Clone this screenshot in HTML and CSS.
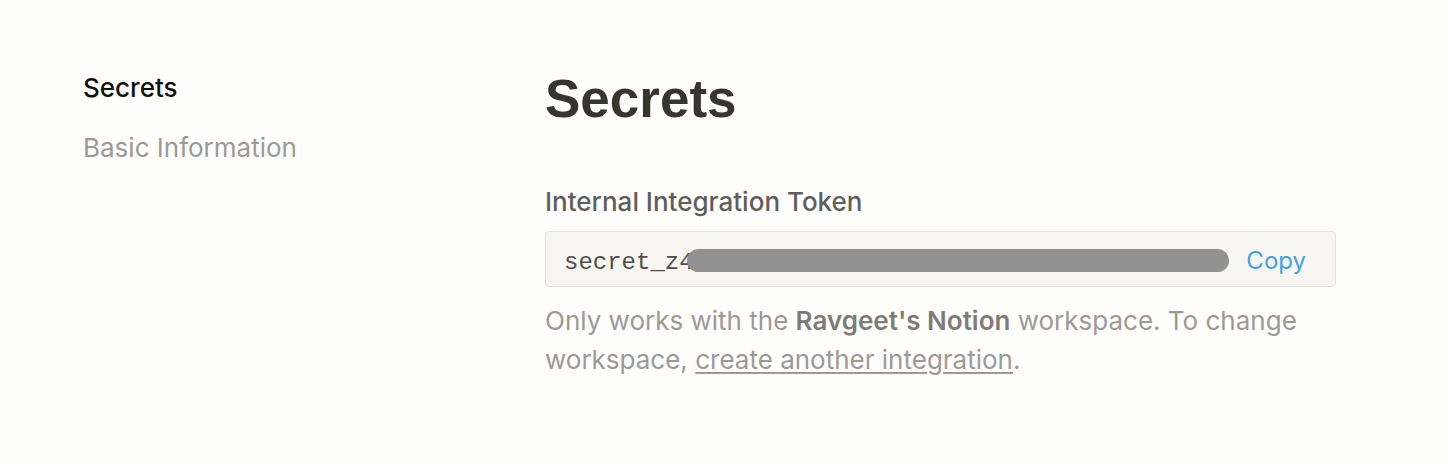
FILE: index.html
```html
<!DOCTYPE html>
<html lang="en">
<head>
  <meta charset="UTF-8" />
  <meta name="viewport" content="width=device-width, initial-scale=1" />
  <title>Secrets - Integration</title>
  <link rel="stylesheet" href="styles.css">
</head>
<body>

<div class="page">
  <nav class="sidebar">
    <a class="nav-item active" href="#secrets">Secrets</a>
    <a class="nav-item" href="#basic">Basic Information</a>
  </nav>

  <main class="content">
    <h1>Secrets</h1>

    <div class="field-label">Internal Integration Token</div>
    <div class="token-box">
      <span class="token">secret_z4<span class="redacted"></span></span>
      <button class="copy-btn" type="button">Copy</button>
    </div>
    <p class="help">
      Only works with the <strong>Ravgeet's Notion</strong> workspace. To change
      workspace, <a href="#">create another integration</a>.
    </p>
  </main>
</div>

</body>
</html>
```

FILE: styles.css
```css
body {
  margin: 0;
  background: #fffefc;
  font-family: Inter, "Liberation Sans", Arial, sans-serif;
  color: #37352f;
}
.page {
  display: flex;
  padding-top: 67px;
}
.sidebar {
  width: 545px;
  padding-left: 83px;
  padding-top: 4px;
  box-sizing: border-box;
  display: flex;
  flex-direction: column;
  align-items: flex-start;
  gap: 26px;
  flex-shrink: 0;
}
.nav-item {
  font-size: 26px;
  line-height: 34px;
  color: #9b9a97;
  text-decoration: none;
}
.nav-item.active {
  color: #111;
  font-weight: 500;
}
.content {
  width: 791px;
}
h1 {
  margin: 0;
  font-family: "Liberation Sans", Arial, sans-serif;
  font-size: 53px;
  line-height: 64px;
  font-weight: bold;
  color: #37352f;
}
.field-label {
  margin-top: 55px;
  font-size: 26px;
  line-height: 32px;
  font-weight: 500;
  color: #5f5e5b;
}
.token-box {
  margin-top: 13px;
  display: flex;
  align-items: baseline;
  justify-content: space-between;
  height: 56px;
  box-sizing: border-box;
  padding: 14px 29px 10px 18px;
  background: #f7f6f3;
  border: 1px solid #e3e2df;
  border-radius: 4px;
}
.token {
  font-family: "Liberation Mono", "Courier New", monospace;
  font-size: 24px;
  line-height: 30px;
  color: #4f4e4b;
  white-space: nowrap;
}
.redacted {
  display: inline-block;
  width: 542px;
  height: 23px;
  margin-left: -7px;
  vertical-align: -3px;
  background: #929292;
  border-radius: 12px;
}
.copy-btn {
  background: none;
  border: none;
  padding: 0;
  font-family: inherit;
  font-size: 24px;
  line-height: 30px;
  color: #45a0dc;
  cursor: pointer;
}
.help {
  margin: 14px 0 0;
  font-size: 26px;
  line-height: 39px;
  color: #9b9a97;
}
.help strong {
  color: #7d7c78;
  font-weight: 600;
}
.help a {
  color: #9b9a97;
  text-decoration: underline;
  text-underline-offset: 3px;
}
```
